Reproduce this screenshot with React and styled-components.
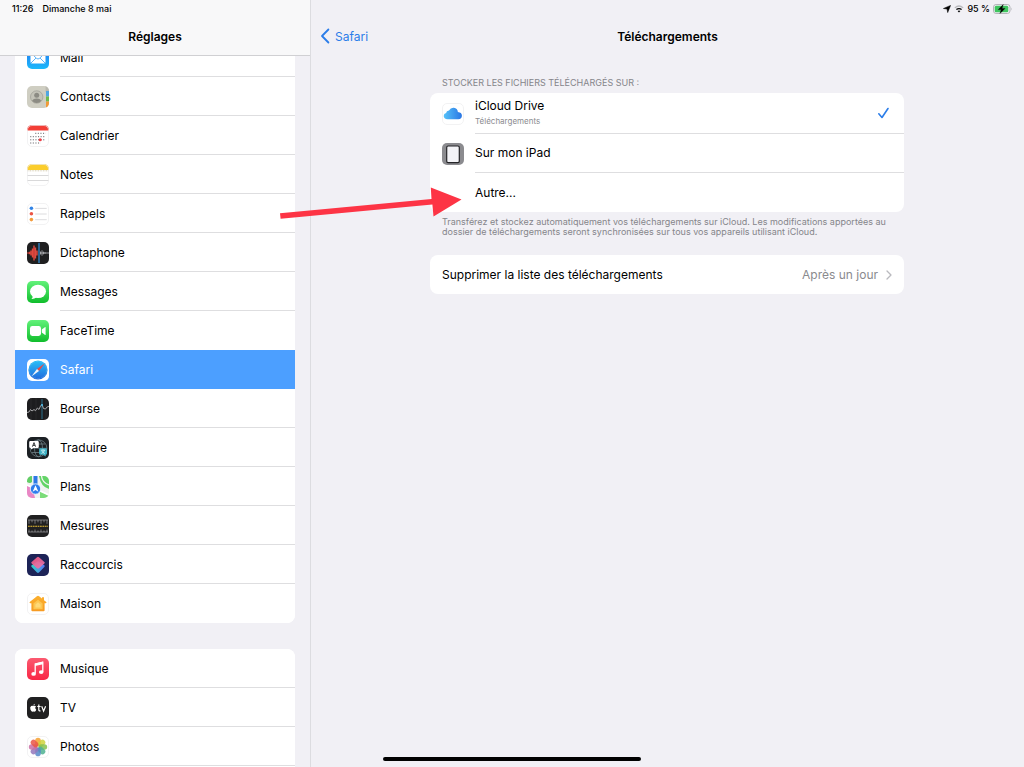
import React, { useState } from "react";
import styled, { createGlobalStyle } from "styled-components";

const GlobalStyle = createGlobalStyle`
    * {
        box-sizing: border-box;
    }

    body {
        margin: 0;
        overflow: hidden;
        background: #f1f0f5;
        color: #000;
        font-family: Inter, "Liberation Sans", sans-serif;
        font-size: 12px;
    }

    h1, h2, p {
        margin: 0;
    }
`;

const Screen = styled.div`
    position: relative;
    display: flex;
    height: 100vh;
    overflow: hidden;
`;

const Sidebar = styled.nav`
    display: flex;
    flex-direction: column;
    flex: 0 0 310px;
    overflow: hidden;
`;

const SidebarHeader = styled.header`
    position: relative;
    z-index: 1;
    flex: none;
    height: 56px;
    background: #f8f8f9;
    border-bottom: 1px solid #d0d0d3;
`;

const StatusBar = styled.div`
    display: flex;
    align-items: center;
    justify-content: ${(props) => (props.$end ? "flex-end" : "flex-start")};
    gap: ${(props) => (props.$end ? "3px" : "9px")};
    height: 17px;
    padding: 0 11px 0 12px;
    font-size: 9px;
    font-weight: 500;
`;

const SidebarTitle = styled.h1`
    font-size: 12px;
    line-height: 40px;
    font-weight: 600;
    text-align: center;
`;

// the list is scrolled a little way under the header
const SidebarList = styled.div`
    display: flex;
    flex-direction: column;
    gap: 26px;
    margin-top: -18px;
    padding: 0 15px;
`;

const Card = styled.div`
    overflow: hidden;
    flex: none;
    background: #fff;
    border-radius: 8px;
`;

const AppCard = styled(Card)`
    border-radius: ${(props) => (props.$first ? "0 0 8px 8px" : "8px 8px 0 0")};
    padding-bottom: ${(props) => (props.$first ? "0" : "8px")};
`;

const AppRow = styled.a`
    display: flex;
    align-items: center;
    gap: 11px;
    height: 39px;
    padding-left: 12px;
    color: ${(props) => (props.$selected ? "#fff" : "#000")};
    background: ${(props) => (props.$selected ? "#4c9fff" : "#fff")};
    text-decoration: none;
`;

const RowLabel = styled.span`
    flex: 1;
    height: 39px;
    line-height: 39px;
    border-bottom: 1px solid ${(props) => (props.$line ? "#dedee0" : "transparent")};
`;

const Icon = styled.svg`
    display: block;
    flex: none;
    width: 22px;
    height: 22px;
`;

const Main = styled.main`
    flex: 1;
    min-width: 0;
    border-left: 1px solid #dcdce0;
`;

const NavBar = styled.header`
    display: grid;
    grid-template-columns: 1fr auto 1fr;
    align-items: center;
    height: 38px;
    padding: 0 9px;
`;

const BackLink = styled.a`
    display: flex;
    align-items: center;
    gap: 5px;
    color: #2b7de9;
    text-decoration: none;
`;

const PageTitle = styled.h2`
    font-size: 12px;
    font-weight: 600;
`;

const Content = styled.div`
    padding: 21px 120px 0 119px;
`;

const Storage = styled.fieldset`
    min-width: 0;
    margin: 0;
    padding: 0;
    border: 0;
`;

const Legend = styled.legend`
    padding: 0 12px;
    height: 17px;
    line-height: 14px;
    font-size: 9px;
    color: #85858a;
    text-transform: uppercase;
`;

const Option = styled.label`
    display: flex;
    align-items: center;
    gap: 11px;
    height: ${(props) => (props.$tall ? "41px" : "39px")};
    padding-left: 12px;
`;

const HiddenRadio = styled.input`
    appearance: none;
    width: 0;
    height: 0;
    margin: 0 -11px 0 0;
`;

const IconSpace = styled.span`
    flex: none;
    width: 22px;
`;

const OptionBody = styled.span`
    display: flex;
    flex: 1;
    align-items: center;
    justify-content: space-between;
    height: 100%;
    padding-right: 14px;
    border-bottom: ${(props) => (props.$line ? "1px solid #dedee0" : "0")};
`;

const OptionText = styled.span`
    display: flex;
    flex-direction: column;
    line-height: 16px;
`;

const OptionDetail = styled.small`
    font-size: 8px;
    line-height: 14px;
    color: #8b8b8f;
`;

const Note = styled.p`
    padding: 5px 12px 0;
    font-size: 9px;
    line-height: 10px;
    color: #85858a;
`;

const ClearCard = styled(Card)`
    margin-top: 18px;
`;

const ClearRow = styled.button`
    display: flex;
    align-items: center;
    justify-content: space-between;
    width: 100%;
    height: 39px;
    padding: 0 12px;
    border: 0;
    background: #fff;
    color: #000;
    font: inherit;
`;

const ClearValue = styled.span`
    display: flex;
    align-items: center;
    gap: 8px;
    color: #8a8a8e;
`;

const Arrow = styled.svg`
    position: absolute;
    left: 280px;
    top: 186px;
    pointer-events: none;
`;

const HomeIndicator = styled.div`
    position: absolute;
    bottom: 6px;
    left: 50%;
    width: 258px;
    height: 4px;
    margin-left: -129px;
    border-radius: 2px;
    background: #000;
`;

function Tile({ fill, outline, children }) {
    return (
        <Icon viewBox="0 0 22 22" aria-hidden="true">
            <g clipPath="url(#tile)">
                <rect width="22" height="22" fill={fill} />
                {children}
            </g>
            {outline && <rect x="0.5" y="0.5" width="21" height="21" rx="4.5" fill="none" stroke="#ececee" strokeWidth="0.7" />}
        </Icon>
    );
}

const gradients = [
    ["mail", "#2371f0", "#1cb9fb", 0, 1],
    ["green", "#62f27a", "#10bd2c", 0, 1],
    ["compass", "#29c0f8", "#2068dc", 0, 1],
    ["music", "#fb5a70", "#f92645", 0, 1],
    ["home", "#fbb02e", "#f79b22", 0, 1],
    ["cloud", "#55c2f9", "#2a76e4", 1, 0],
    ["pinkTop", "#f5577b", "#e978b5", 1, 1],
    ["blueLow", "#31d4c5", "#5a74f4", 1, 0],
];

const DefsSvg = styled.svg`
    position: absolute;
    width: 0;
    height: 0;
`;

function IconDefs() {
    return (
        <DefsSvg aria-hidden="true">
            <defs>
                <clipPath id="tile">
                    <rect width="22" height="22" rx="5" />
                </clipPath>
                {gradients.map(([id, from, to, x2, y2]) => (
                    <linearGradient key={id} id={`fill-${id}`} x2={x2} y2={y2}>
                        <stop stopColor={from} />
                        <stop offset="1" stopColor={to} />
                    </linearGradient>
                ))}
            </defs>
        </DefsSvg>
    );
}

const icons = {
    mail: (
        <Tile fill="url(#fill-mail)">
            <rect x="3.5" y="5.5" width="15" height="11" rx="1.6" fill="#fff" />
            <path d="M4 6.2l5.6 5.2q1.4 1.2 2.8 0L18 6.2M4 16l5-5M18 16l-5-5" fill="none" stroke="#35a0f6" strokeWidth="0.8" />
        </Tile>
    ),
    contacts: (
        <Tile fill="#cfcec2">
            <rect x="18.6" width="3.4" height="6" fill="#bab9b0" />
            <rect x="19" y="5" width="3" height="5.5" fill="#50a6e2" />
            <rect x="19" y="10.5" width="3" height="5" fill="#6cba50" />
            <rect x="19" y="15.5" width="3" height="6.5" fill="#f19a38" />
            <circle cx="9.7" cy="11" r="6.2" fill="#c4c3b8" stroke="#a3a299" strokeWidth="0.8" />
            <circle cx="9.7" cy="9.2" r="2.5" fill="#8c8b83" />
            <path d="M5 14.8q1.4-2.3 4.7-2.3t4.7 2.3q-2 2.3-4.7 2.3T5 14.8z" fill="#8c8b83" />
        </Tile>
    ),
    calendar: (
        <Tile fill="#fff" outline>
            <rect width="22" height="5.5" fill="#f33e36" />
            <g stroke="#55555a" strokeWidth="0.9" strokeDasharray="1.1 1.5">
                <path d="M8.2 8.3h10.5M3.2 11.7h15.6M3.2 14.8h15.6M3.2 18h10.5" />
            </g>
            <circle cx="13.2" cy="14.8" r="1.5" fill="#f33e46" />
        </Tile>
    ),
    notes: (
        <Tile fill="#fff" outline>
            <rect width="22" height="6" fill="#fbcd2c" />
            <path d="M0 6.8h22" stroke="#b8aa79" strokeWidth="0.7" strokeDasharray="0.8 0.8" />
            <path d="M0 11.5h22M0 16.5h22" stroke="#cfcfd1" strokeWidth="0.8" />
        </Tile>
    ),
    reminders: (
        <Tile fill="#fff" outline>
            <circle cx="4.4" cy="5.2" r="1.8" fill="#3284e6" />
            <circle cx="4.4" cy="10.8" r="1.8" fill="#ec5545" />
            <circle cx="4.4" cy="16.6" r="1.8" fill="#f49c3c" />
            <path d="M8.2 5.4h11.5M8.2 11h11.5M8.2 16.7h11.5" stroke="#d3d3d6" strokeWidth="0.8" />
        </Tile>
    ),
    memos: (
        <Tile fill="#1f1f20">
            <path d="M0 11h3" stroke="#e0483f" strokeWidth="1" />
            <path d="M2.5 9.8v2.4M4 8.5v5M5.5 6.5v9M7 3.5v15M8.5 5.5v11M10 8.5v5" stroke="#e0483f" strokeWidth="1.4" />
            <path d="M12 1v20" stroke="#3288cb" strokeWidth="1.3" />
            <path d="M13.5 9.5v3M15 8.3v5.4M16.5 9.7v2.6M18 10.2v1.6M13 11h9" stroke="#b9b9bc" strokeWidth="0.8" />
        </Tile>
    ),
    messages: (
        <Tile fill="url(#fill-green)">
            <ellipse cx="11" cy="10.4" rx="8" ry="6.7" fill="#fff" />
            <path d="M6 14.2q.2 2.4-1.5 3.7 3 .2 5-2z" fill="#fff" />
        </Tile>
    ),
    facetime: (
        <Tile fill="url(#fill-green)">
            <rect x="3" y="6" width="11" height="10" rx="2.4" fill="#fff" />
            <path d="M14.8 9.6l3-2.4q.8-.5.8.4v6.8q0 .9-.8.4l-3-2.4z" fill="#fff" />
        </Tile>
    ),
    safari: (
        <Tile fill="#fff">
            <circle cx="11" cy="11" r="9.6" fill="url(#fill-compass)" />
            <circle cx="11" cy="11" r="8.5" fill="none" stroke="#a9dcfb" strokeWidth="0.6" strokeDasharray="0.4 1" />
            <path d="M17.6 4.6L12 12 10 10z" fill="#ef4742" />
            <path d="M4.4 17.4L12 12 10 10z" fill="#f2f4f8" />
        </Tile>
    ),
    stocks: (
        <Tile fill="#1d1d1f">
            <path d="M4 0v22M9 0v22M19 0v22" stroke="#303033" strokeWidth="0.6" />
            <path d="M15 1v20" stroke="#2e86a8" strokeWidth="0.8" />
            <path d="M0 14.5l2-.5 1.5-2.5L5 13l2-1.5 1.5 1.2L10.4 10l1.6 1.5L13.5 8l1.5-1.5 1.5 4 2 .5 1.5-2 2-.7" fill="none" stroke="#c4c4c6" strokeWidth="0.8" />
            <circle cx="15" cy="7" r="1.1" fill="#46b5e1" />
        </Tile>
    ),
    translate: (
        <Tile fill="#1c2024">
            <g fill="none" stroke="#7a8c94" strokeWidth="0.7">
                <circle cx="11.5" cy="11.3" r="8.4" />
                <ellipse cx="11.5" cy="11.3" rx="4" ry="8.4" />
                <path d="M3 11.3h17M5 15.5h13M5 7h13" />
            </g>
            <path d="M3.5 4h7q1.3 0 1.3 1.3v4.4q0 1.3-1.3 1.3H6.3L4 12.5V11q-1.8 0-1.8-1.3V5.3Q2.2 4 3.5 4z" fill="#fff" />
            <path d="M5.4 9.7L7 5.6l1.6 4.1M6 8.4h2" fill="none" stroke="#25292c" strokeWidth="0.9" />
            <path d="M13.4 11.3h5.3q1.3 0 1.3 1.3v3.8q0 1.3-1.3 1.3v1.8L16 17.7h-2.6q-1.3 0-1.3-1.3v-3.8q0-1.3 1.3-1.3z" fill="#3fb0c4" />
            <path d="M13.9 13.2h4.3M16 12.3v.9M14.5 16.5q2.6-1 2.9-3.2M14.8 13.8q.7 2 3 2.7" fill="none" stroke="#e9f9fc" strokeWidth="0.7" />
        </Tile>
    ),
    maps: (
        <Tile fill="#f1f2f0">
            <path d="M12 0h10v13q-8-2-10-13z" fill="#63d467" />
            <path d="M14.5 0q.6 6.5 7.5 9" fill="none" stroke="#f4f6f2" strokeWidth="1.3" />
            <path d="M0 9q6 1.5 8 13H0z" fill="#e987c5" />
            <path d="M0 0h5v6q-2 2-5 0z" fill="#62ce66" />
            <path d="M13 15l9 5v2h-9z" fill="#7bdc79" />
            <path d="M0 9l22 10" stroke="#fff" strokeWidth="1.8" />
            <path d="M8.5 0v9" stroke="#2c78e7" strokeWidth="4" />
            <circle cx="8.5" cy="13" r="5.2" fill="#2e7cec" stroke="#fff" strokeWidth="0.8" />
            <path d="M8.5 9.2l2.9 6.6-2.9-1.7-2.9 1.7z" fill="#fff" />
        </Tile>
    ),
    measure: (
        <Tile fill="#202021">
            <path d="M2 5v3.8M5 5v2.3M8 5v3.8M11 5v2.3M14 5v3.8M17 5v2.3M20 5v3.8M1 5h20" stroke="#b0b0b2" strokeWidth="0.6" />
            <path d="M1 11.3h20" stroke="#e6bd33" strokeWidth="1.1" strokeDasharray="1.8 0.6" />
            <path d="M2 17v-2.5M5 17v-1.5M8 17v-2.5M11 17v-1.5M14 17v-2.5M17 17v-1.5M20 17v-2.5M1 17h20" stroke="#b0b0b2" strokeWidth="0.6" />
        </Tile>
    ),
    shortcuts: (
        <Tile fill="#1d2357">
            <path d="M11 7.3l6.3 4q1.1.8 0 1.6l-5.3 5.6q-1 .8-2 0l-5.3-5.6q-1.1-.8 0-1.6z" fill="url(#fill-blueLow)" />
            <path d="M10 3.2q1-.8 2 0l5.3 4.7q1.1.8 0 1.6L12 14.2q-1 .8-2 0L4.7 9.5q-1.1-.8 0-1.6z" fill="url(#fill-pinkTop)" opacity="0.92" />
        </Tile>
    ),
    house: (
        <Tile fill="#fff" outline>
            <path d="M11 2.8q.6 0 1.1.4L15 5.5V4.2h2v3l2 1.6q.7.6.4 1-.3.5-1 .4h-.8v7q0 1-1 1H5.4q-1 0-1-1v-7h-.8q-.7.1-1-.4-.3-.4.4-1l6.9-5.6q.5-.4 1.1-.4z" fill="url(#fill-home)" />
            <path d="M11 6.8l4.6 3.8v5.6H6.4v-5.6z" fill="#fcc651" />
            <path d="M11 9.3l2.6 2.2v3H8.4v-3z" fill="#fed978" />
        </Tile>
    ),
    music: (
        <Tile fill="url(#fill-music)">
            <path d="M8.2 15.5V6l7.6-1.7v9.4" fill="none" stroke="#fff" strokeWidth="1.3" />
            <path d="M8 5.4l8-1.8v2.6L8 8z" fill="#fff" />
            <ellipse cx="6.6" cy="15.9" rx="2.3" ry="1.9" fill="#fff" />
            <ellipse cx="14.2" cy="14.1" rx="2.3" ry="1.9" fill="#fff" />
        </Tile>
    ),
    tv: (
        <Tile fill="#202021">
            <path d="M6.5 9.1q1.6-.8 2.5.5-1.7 1.6.3 3.1-.7 2-1.9 2-.7-.4-1.6 0-1.3.2-2.3-1.9-1-2.8.6-3.8 1.1-.5 2.4.1z" fill="#fff" />
            <path d="M6.3 8.7q0-1.6 1.5-1.9.1 1.6-1.5 1.9z" fill="#fff" />
            <path d="M11.8 7.6v5.2q0 1.4 1.7 1.1M10.3 9.5h3.3M14.7 9.3l1.9 4.8 2-4.8" fill="none" stroke="#fff" strokeWidth="1.2" />
        </Tile>
    ),
    photos: (
        <Tile fill="#fff" outline>
            {["#f5a030", "#cfd23b", "#86c04e", "#4fb190", "#5687c8", "#9377bc", "#ca6ea5", "#ea5546"].map((color, i) => (
                <rect key={color} x="8.2" y="1.8" width="5.6" height="8.6" rx="2.8" fill={color} opacity="0.85" transform={`rotate(${i * 45} 11 11)`} />
            ))}
        </Tile>
    ),
    icloud: (
        <Tile fill="#fff" outline>
            <path d="M5.6 16.2q-3.8-.2-3.9-3.2 0-2.5 2.4-3 .3-2.5 2.9-2.5 1.6-3 4.9-2.7 3.5.4 4 4.2 4 .4 4 3.7-.1 3.4-3.6 3.5z" fill="url(#fill-cloud)" />
        </Tile>
    ),
    ipad: (
        <Tile fill="#8b8b8f">
            <rect x="4.7" y="3" width="12.6" height="16.6" rx="1.4" fill="#f3f3f7" stroke="#252528" strokeWidth="1.2" />
        </Tile>
    ),
};

const appGroups = [
    [
        ["mail", "Mail"],
        ["contacts", "Contacts"],
        ["calendar", "Calendrier"],
        ["notes", "Notes"],
        ["reminders", "Rappels"],
        ["memos", "Dictaphone"],
        ["messages", "Messages"],
        ["facetime", "FaceTime"],
        ["safari", "Safari"],
        ["stocks", "Bourse"],
        ["translate", "Traduire"],
        ["maps", "Plans"],
        ["measure", "Mesures"],
        ["shortcuts", "Raccourcis"],
        ["house", "Maison"],
    ],
    [
        ["music", "Musique"],
        ["tv", "TV"],
        ["photos", "Photos"],
    ],
];

const storageOptions = [
    { id: "icloud", label: "iCloud Drive", detail: "Téléchargements" },
    { id: "ipad", label: "Sur mon iPad" },
    { id: "other", label: "Autre..." },
];

function AppGroup({ apps, first }) {
    const selected = apps.findIndex(([id]) => id === "safari");
    return (
        <AppCard $first={first}>
            {apps.map(([id, label], i) => {
                const lastOfGroup = first && i === apps.length - 1;
                const besideSelected = selected >= 0 && (i === selected || i === selected - 1);
                return (
                    <AppRow key={id} href={`#${id}`} $selected={i === selected}>
                        {icons[id]}
                        <RowLabel $line={!lastOfGroup && !besideSelected}>{label}</RowLabel>
                    </AppRow>
                );
            })}
        </AppCard>
    );
}

function StatusIcons() {
    return (
        <>
            <svg width="8" height="8" viewBox="0 0 8 8" aria-hidden="true">
                <path d="M7.6.4L4.7 7.6 4 4 .4 3.5z" fill="#000" stroke="#000" strokeWidth="0.5" strokeLinejoin="round" />
            </svg>
            <svg width="10" height="8" viewBox="0 0 10 8" fill="none" aria-hidden="true">
                <path d="M.8 2.9Q5-.9 9.2 2.9" stroke="#b9b9bd" strokeWidth="1.2" />
                <path d="M2.4 4.6Q5 2.5 7.6 4.6" stroke="#000" strokeWidth="1.3" />
                <path d="M3.6 6L5 7.6 6.4 6Q5 5 3.6 6z" fill="#000" />
            </svg>
            <span>95 %</span>
            <svg width="20" height="10" viewBox="0 0 20 10" aria-hidden="true">
                <rect x="0.5" y="0.5" width="16.5" height="9" rx="2.6" fill="#f1f0f5" stroke="#a5a5a9" strokeWidth="0.8" />
                <rect x="1.7" y="1.7" width="13.6" height="6.6" rx="1.5" fill="#3fc55f" />
                <path d="M18.3 3.6q1.2 1.4 0 2.8z" fill="#a5a5a9" />
                <path d="M10.2.6L5.3 5.6h3L7 9.4l5-5H9z" fill="#000" stroke="#000" strokeWidth="0.4" />
            </svg>
        </>
    );
}

export default function App() {
    const [storage, setStorage] = useState("icloud");

    return (
        <Screen>
            <GlobalStyle />
            <IconDefs />
            <Sidebar>
                <SidebarHeader>
                    <StatusBar>
                        <span>11:26</span>
                        <span>Dimanche 8 mai</span>
                    </StatusBar>
                    <SidebarTitle>Réglages</SidebarTitle>
                </SidebarHeader>
                <SidebarList>
                    {appGroups.map((apps, i) => (
                        <AppGroup key={i} apps={apps} first={i === 0} />
                    ))}
                </SidebarList>
            </Sidebar>
            <Main>
                <StatusBar $end>
                    <StatusIcons />
                </StatusBar>
                <NavBar>
                    <BackLink href="#safari">
                        <svg width="10" height="16" viewBox="0 0 10 16" aria-hidden="true">
                            <path d="M8.4 1.5L2 8l6.4 6.5" fill="none" stroke="#2b7de9" strokeWidth="1.8" strokeLinecap="round" strokeLinejoin="round" />
                        </svg>
                        Safari
                    </BackLink>
                    <PageTitle>Téléchargements</PageTitle>
                </NavBar>
                <Content>
                    <Storage>
                        <Legend>Stocker les fichiers téléchargés sur :</Legend>
                        <Card>
                            {storageOptions.map(({ id, label, detail }) => (
                                <Option key={id} $tall={Boolean(detail)}>
                                    <HiddenRadio
                                        type="radio"
                                        name="storage"
                                        value={id}
                                        checked={storage === id}
                                        onChange={() => setStorage(id)}
                                    />
                                    {icons[id] || <IconSpace />}
                                    <OptionBody $line={id !== "other"}>
                                        <OptionText>
                                            {label}
                                            {detail && <OptionDetail>{detail}</OptionDetail>}
                                        </OptionText>
                                        {storage === id && (
                                            <svg width="13" height="12" viewBox="0 0 13 12" aria-hidden="true">
                                                <path d="M1.8 6.8l3.2 3.7 6-9" fill="none" stroke="#2b7de9" strokeWidth="1.6" strokeLinecap="round" strokeLinejoin="round" />
                                            </svg>
                                        )}
                                    </OptionBody>
                                </Option>
                            ))}
                        </Card>
                    </Storage>
                    <Note>
                        Transférez et stockez automatiquement vos téléchargements sur iCloud. Les modifications apportées au
                        dossier de téléchargements seront synchronisées sur tous vos appareils utilisant iCloud.
                    </Note>
                    <ClearCard>
                        <ClearRow type="button">
                            Supprimer la liste des téléchargements
                            <ClearValue>
                                Après un jour
                                <svg width="6" height="10" viewBox="0 0 6 10" aria-hidden="true">
                                    <path d="M1 1l4 4-4 4" fill="none" stroke="#b9b9be" strokeWidth="1.3" strokeLinecap="round" strokeLinejoin="round" />
                                </svg>
                            </ClearValue>
                        </ClearRow>
                    </ClearCard>
                </Content>
            </Main>
            <Arrow width="182" height="34" viewBox="0 0 182 34" aria-hidden="true">
                <path d="M0 27.3L151.5 13 150.8 1.5 181.5 13.5 153.5 30.5 152.4 18.6.6 32.7z" fill="#fd3445" />
            </Arrow>
            <HomeIndicator />
        </Screen>
    );
}
